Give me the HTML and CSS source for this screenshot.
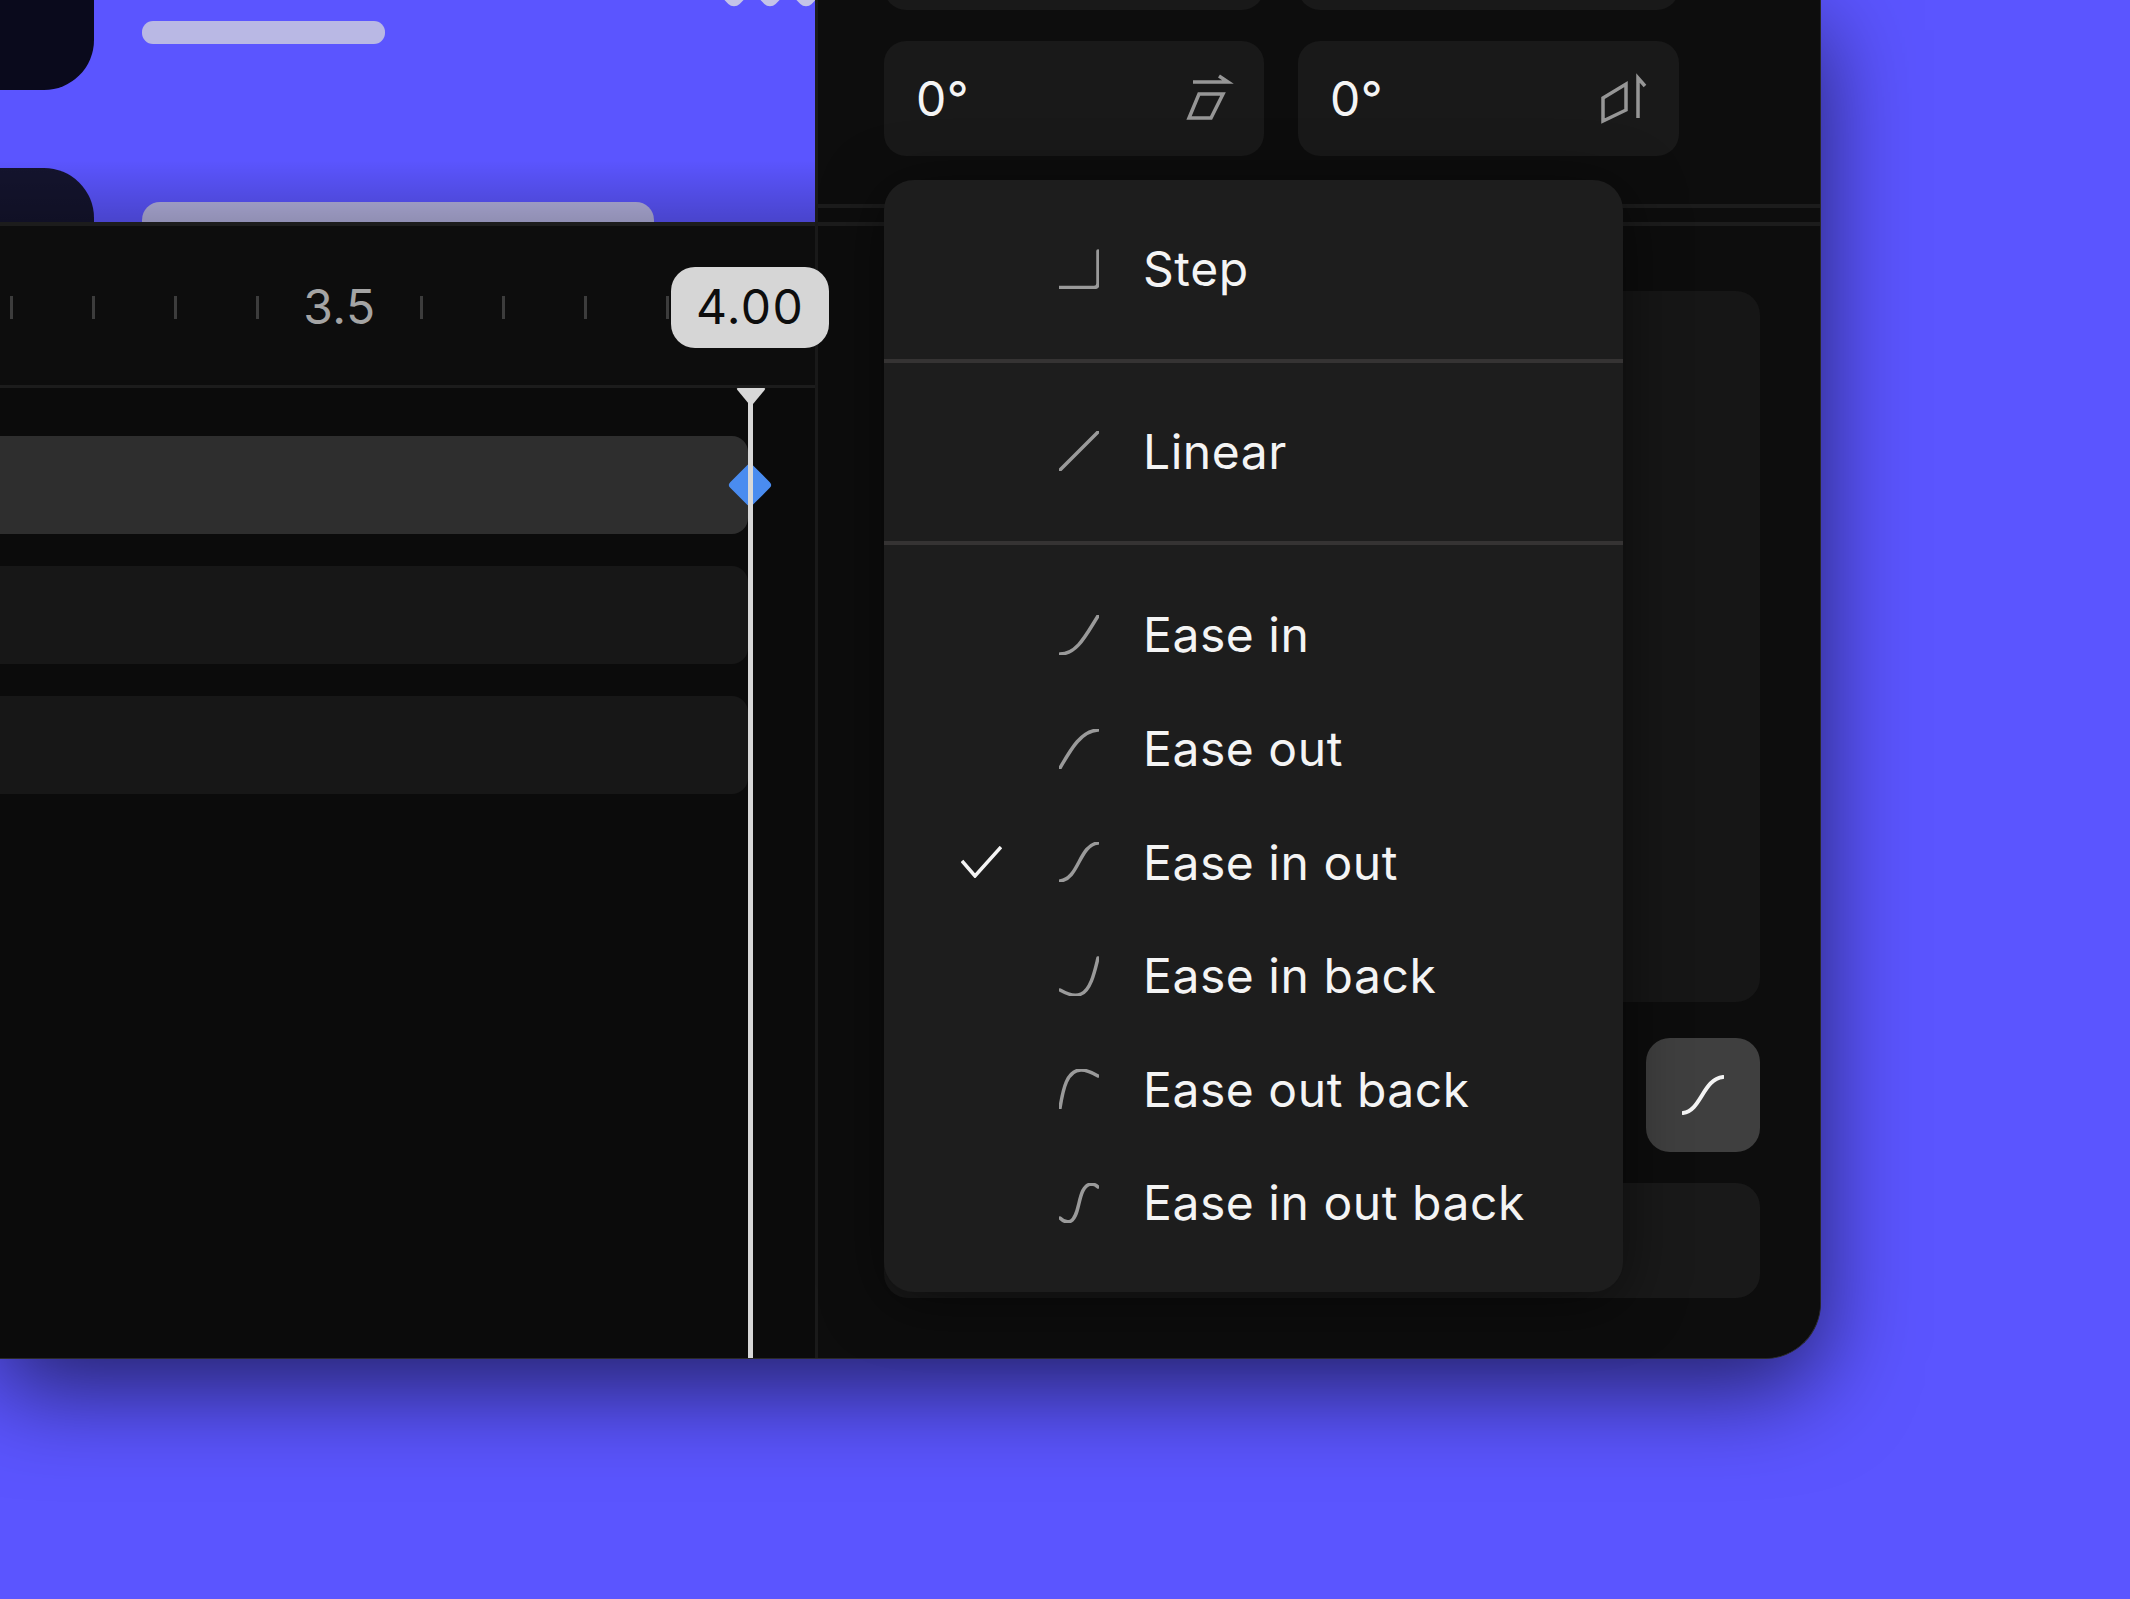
FILE: index.html
```html
<!DOCTYPE html>
<html lang="en">
<head>
<meta charset="utf-8">
<title>Easing menu</title>
<link rel="stylesheet" href="styles.css">
</head>
<body>
<div class="window">
  <div class="left">
    <div class="preview">
      <div class="preview-row first">
        <div class="tile tile-a"></div>
        <div class="bar bar-a"></div>
      </div>
      <div class="preview-row second">
        <div class="tile tile-b"></div>
        <div class="bar bar-b"></div>
      </div>
      <i class="dot dot-1"></i><i class="dot dot-2"></i><i class="dot dot-3"></i>
    </div>
    <div class="timeline">
      <div class="ruler">
        <div class="cell"><i class="tick"></i></div>
        <div class="cell"><i class="tick"></i></div>
        <div class="cell"><i class="tick"></i></div>
        <div class="cell"><i class="tick"></i></div>
        <div class="cell"><span class="ruler-label">3.5</span></div>
        <div class="cell"><i class="tick"></i></div>
        <div class="cell"><i class="tick"></i></div>
        <div class="cell"><i class="tick"></i></div>
        <div class="cell"><i class="tick"></i></div>
        <div class="cell"><span class="badge">4.00</span></div>
      </div>
      <div class="tracks">
        <div class="track track-active"><i class="keyframe"></i></div>
        <div class="track"></div>
        <div class="track"></div>
      </div>
      <div class="playhead">
        <svg class="playhead-top" width="30" height="18" viewBox="0 0 30 18"><path d="M2 0H28Q30 0 28.600 2L17 16Q15 18 13 16L1.400 2Q0 0 2 0Z"/></svg>
      </div>
    </div>
  </div>
  <div class="panel">
    <div class="fields">
      <div class="field"></div>
      <div class="field"></div>
      <div class="field">
        <span>0°</span>
        <svg class="field-icon" width="46" height="46" viewBox="0 0 46 46"><path d="M7 6H42L33 0"/><path d="M13 18H37L25 42H3Z"/></svg>
      </div>
      <div class="field">
        <span>0°</span>
        <svg class="field-icon" width="46" height="46" viewBox="0 0 46 46"><path d="M2 22L25 8V34L2 45Z"/><path d="M37 42V2L44 10"/></svg>
      </div>
    </div>
    <div class="rule rule-a"></div>
    <div class="rule rule-b"></div>
    <div class="panel-body">
      <div class="big-box"></div>
      <div class="curve-row">
        <div class="curve-field"></div>
        <button class="curve-btn" type="button">
          <svg class="curve-icon" width="42" height="40" viewBox="0 0 42 40"><path d="M1 38C19 36 21 4 41 2"/></svg>
        </button>
      </div>
      <div class="bottom-box"></div>
    </div>
    <div class="menu">
      <div class="menu-section">
        <div class="item"><span class="check"></span><svg class="ease" viewBox="0 0 40 40"><path d="M0 38.500H35Q39 38.500 39 34.500V2"/></svg><span>Step</span></div>
      </div>
      <div class="menu-section">
        <div class="item"><span class="check"></span><svg class="ease" viewBox="0 0 40 40"><path d="M1 39L39 1"/></svg><span>Linear</span></div>
      </div>
      <div class="menu-section">
        <div class="item"><span class="check"></span><svg class="ease" viewBox="0 0 40 40"><path d="M1 39C18 39 27 20 39 1"/></svg><span>Ease in</span></div>
        <div class="item"><span class="check"></span><svg class="ease" viewBox="0 0 40 40"><path d="M1 39C12 20 22 2 39 1"/></svg><span>Ease out</span></div>
        <div class="item"><svg class="check" viewBox="0 0 41 32"><path d="M1 15L14 30L40 1"/></svg><svg class="ease" viewBox="0 0 40 40"><path d="M1 39C20 37 20 3 39 1"/></svg><span>Ease in out</span></div>
        <div class="item"><span class="check"></span><svg class="ease" viewBox="0 0 40 40"><path d="M1 34C8 38 16 41 22 38C32 34 36 14 39 2"/></svg><span>Ease in back</span></div>
        <div class="item"><span class="check"></span><svg class="ease" viewBox="0 0 40 40"><path d="M1 39C4 20 8 1 22 1C28 1 34 4 39 7"/></svg><span>Ease out back</span></div>
        <div class="item"><span class="check"></span><svg class="ease" viewBox="0 0 40 40"><path d="M1 35C4 38 8 40 12 38C22 32 18 3 32 1C35 1 37 2 39 4"/></svg><span>Ease in out back</span></div>
      </div>
    </div>
  </div>
</div>
</body>
</html>
```
FILE: styles.css
```css
* { box-sizing: border-box; }
html, body { margin: 0; height: 100%; }
body {
  background: #5b55ff;
  overflow: hidden;
  font-family: Inter, "Liberation Sans", sans-serif;
  font-size: 48px;
  letter-spacing: .55px;
  color: #f4f4f4;
}
.window {
  display: flex;
  width: 1821px;
  height: 1359px;
  background: #0d0d0d;
  border-right: 1px solid #2a2a2a;
  border-bottom: 1px solid #2a2a2a;
  border-bottom-right-radius: 56px;
  box-shadow: 0 30px 95px rgba(0, 0, 0, .6);
}
.left {
  width: 815px;
  flex: none;
  display: flex;
  flex-direction: column;
  position: relative;
  z-index: 2;
}

/* preview */
.preview {
  height: 222px;
  flex: none;
  background: #5b55ff;
  overflow: hidden;
  position: relative;
  display: flex;
  flex-direction: column;
  gap: 78px;
}
.preview::after {
  content: "";
  position: absolute;
  left: 0;
  right: 0;
  bottom: 0;
  height: 62px;
  background: linear-gradient(rgba(0, 0, 0, 0), rgba(0, 0, 0, .2));
}
.preview-row { display: flex; gap: 48px; flex: none; }
.first { height: 90px; }
.second { height: 200px; }
.tile { width: 94px; height: 100%; flex: none; }
.tile-a { background: #0a0a1c; border-bottom-right-radius: 50px; }
.tile-b { background: #14142e; border-top-right-radius: 50px; }
.bar { flex: none; }
.bar-a { width: 243px; height: 23px; margin-top: 21px; background: #b9b8e4; border-radius: 11px; }
.bar-b { width: 512px; height: 60px; margin-top: 34px; background: #b4b2e0; border-radius: 18px; }
.dot {
  position: absolute;
  top: -17px;
  width: 22px;
  height: 22px;
  background: #c4c3e8;
  border-radius: 8px;
  transform: rotate(45deg);
}
.dot-1 { left: 723px; }
.dot-2 { left: 759px; }
.dot-3 { left: 795px; }

/* timeline */
.timeline {
  flex: 1;
  position: relative;
  background: #0b0b0b;
}
.ruler {
  height: 166px;
  background: #0d0d0d;
  border-top: 4px solid #1c1c1c;
  border-bottom: 3px solid #1c1c1c;
  display: flex;
  position: relative;
}
.cell {
  width: 82px;
  flex: none;
  display: flex;
  align-items: center;
  justify-content: center;
  padding-top: 3px;
  position: relative;
  left: -30px;
}
.tick { width: 3px; height: 23px; background: #3c3c3c; flex: none; }
.ruler-label { color: #a4a4a4; line-height: 1; flex: none; margin-left: 1px; }
.badge {
  flex: none;
  width: 158px;
  height: 81px;
  margin-left: 1px;
  padding-left: 1px;
  padding-bottom: 1px;
  background: #d6d6d6;
  color: #0d0d0d;
  border-radius: 24px;
  letter-spacing: 1.4px;
  display: flex;
  align-items: center;
  justify-content: center;
}
.tracks {
  padding-top: 48px;
  width: 748px;
  display: flex;
  flex-direction: column;
  gap: 32px;
}
.track {
  height: 98px;
  background: #171717;
  border-radius: 0 16px 16px 0;
  position: relative;
}
.track-active { background: #2e2e2e; }
.keyframe {
  position: absolute;
  right: -18px;
  top: 33px;
  width: 32px;
  height: 32px;
  background: #4a8cf0;
  border-radius: 4px;
  transform: rotate(45deg);
}
.playhead {
  position: absolute;
  left: 748px;
  top: 166px;
  bottom: 0;
  width: 5px;
  background: #d8d8d8;
}
.playhead-top {
  position: absolute;
  top: 0;
  left: -12px;
  fill: #d8d8d8;
}

/* right panel */
.panel {
  flex: 1;
  position: relative;
  border-left: 3px solid #1a1a1a;
  padding: 0 60px 0 66px;
  background: #0d0d0d;
  border-bottom-right-radius: 56px;
}
.fields {
  display: grid;
  grid-template-columns: 380px 381px;
  gap: 31px 34px;
  margin-top: -105px;
}
.field {
  height: 115px;
  background: #191919;
  border-radius: 22px;
  display: flex;
  align-items: center;
  justify-content: space-between;
  padding: 0 32px 0 32px;
}
.field-icon { fill: none; stroke: #969696; stroke-width: 3.5; flex: none; overflow: visible; }
.rule { height: 4px; background: #1c1c1c; margin: 0 -60px 0 -66px; }
.rule-a { margin-top: 48px; }
.rule-b { margin-top: 14px; }
.panel-body {
  padding-top: 65px;
  display: flex;
  flex-direction: column;
}
.big-box { height: 711px; background: #161616; border-radius: 24px; }
.curve-row { display: flex; gap: 24px; margin-top: 36px; }
.curve-field { flex: 1; height: 114px; background: #191919; border-radius: 24px; }
.curve-btn {
  width: 114px;
  height: 114px;
  flex: none;
  border: 0;
  padding: 0;
  background: #3f3f3f;
  border-radius: 24px;
  display: flex;
  align-items: center;
  justify-content: center;
}
.curve-icon { fill: none; stroke: #f4f4f4; stroke-width: 4; stroke-linecap: round; }
.bottom-box { height: 115px; margin-top: 31px; background: #191919; border-radius: 24px; }

/* menu */
.menu {
  position: absolute;
  left: 66px;
  top: 180px;
  width: 739px;
  background: #1d1d1d;
  border-radius: 30px;
  box-shadow: 0 10px 60px rgba(0, 0, 0, .5);
}
.menu-section { padding: 32px 0 33px; }
.menu-section:last-child { padding: 33px 0 32px; }
.menu-section + .menu-section { border-top: 4px solid #353333; }
.item {
  height: 113.6px;
  display: flex;
  align-items: center;
  padding-left: 77px;
  white-space: nowrap;
}
.check {
  width: 41px;
  height: 32px;
  flex: none;
  margin-right: 57px;
  fill: none;
  stroke: #f4f4f4;
  stroke-width: 3.5;
}
.ease {
  width: 40px;
  height: 40px;
  flex: none;
  margin-right: 44px;
  fill: none;
  stroke: #9a9a9a;
  stroke-width: 3.5;
  stroke-linecap: round;
}
```
